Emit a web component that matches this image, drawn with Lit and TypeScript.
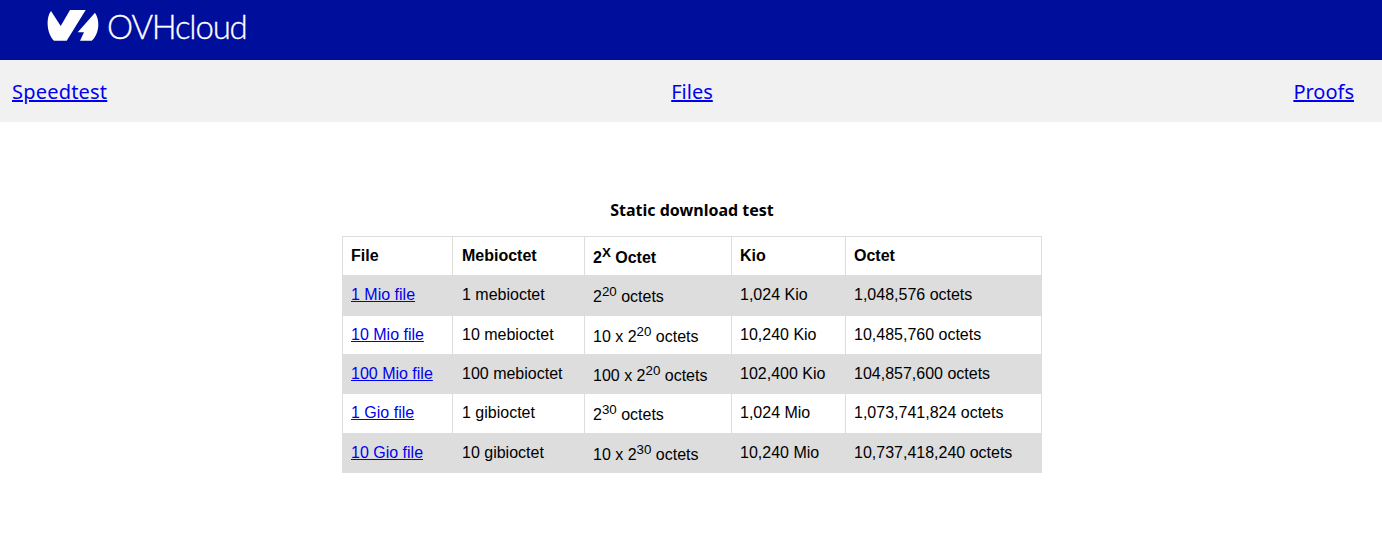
import { LitElement, html, css } from "lit";
import { customElement } from "lit/decorators.js";

const rows = [
  ["1 Mio file", "1 mebioctet", html`2<sup>20</sup> octets`, "1,024 Kio", "1,048,576 octets"],
  ["10 Mio file", "10 mebioctet", html`10 x 2<sup>20</sup> octets`, "10,240 Kio", "10,485,760 octets"],
  ["100 Mio file", "100 mebioctet", html`100 x 2<sup>20</sup> octets`, "102,400 Kio", "104,857,600 octets"],
  ["1 Gio file", "1 gibioctet", html`2<sup>30</sup> octets`, "1,024 Mio", "1,073,741,824 octets"],
  ["10 Gio file", "10 gibioctet", html`10 x 2<sup>30</sup> octets`, "10,240 Mio", "10,737,418,240 octets"],
];

@customElement("app-root")
export class AppRoot extends LitElement {
  static styles = css`
    :host { display: block; font-family: "Liberation Sans", Arial, sans-serif; color: #000; background: #fff; min-height: 543px; }
    a { color: #0000ee; }
    .top { height: 60px; background: #000e9c; display: flex; align-items: center; padding-left: 47px; gap: 8px; box-sizing: border-box; }
    .mark { width: 52px; height: 32px; display: block; margin-top: -10px; }
    .brand { color: #fff; font-family: "Lato", sans-serif; font-weight: 300; font-size: 33px; letter-spacing: -1.2px; line-height: 32px; margin-top: -9px; -webkit-text-stroke: 0.3px #fff; }
    .nav { height: 62px; background: #f1f1f1; display: grid; grid-template-columns: 1fr auto 1fr; align-items: center; padding-left: 2px; font: 400 20px "Noto Sans", sans-serif; }
    .nav a:first-child { justify-self: start; margin-left: 10px; letter-spacing: 0.2px; }
    .nav a:last-child { justify-self: end; margin-right: 28px; }
    .main { padding-left: 2px; }
    .title { margin: 78px 0 0; text-align: center; font: 700 16px/20px "Noto Sans", sans-serif; height: 36px; }
    table { border-collapse: collapse; width: 700px; margin: 0 auto; table-layout: fixed; font-size: 16px; }
    .c1 { width: 110px; }
    .c2 { width: 132px; }
    .c3 { width: 147px; }
    .c4 { width: 114px; }
    th, td { border: 1px solid #ddd; padding: 8px; text-align: left; }
    th:nth-child(2), td:nth-child(2) { padding-left: 9px; }
    th { font-weight: 700; }
    tbody tr:nth-child(odd) { background: #ddd; }
  `;

  render() {
    return html`
      <div class="top">
        <svg class="mark" viewBox="0 0 52 32" aria-hidden="true">
          <path fill="#fff" d="M4 2 L13.7 17 L23 1 L38.7 1 L19.7 31.7 L7 31.7 C0.5 26 -2 10 4 2 Z"/>
          <path fill="#fff" d="M48 3.7 L30.7 23.3 L37 23.3 L33 31.7 L44.7 31.7 C52 25 53.5 12 48 3.7 Z"/>
        </svg>
        <span class="brand">OVHcloud</span>
      </div>
      <nav class="nav">
        <a href="#">Speedtest</a>
        <a href="#">Files</a>
        <a href="#">Proofs</a>
      </nav>
      <div class="main">
        <p class="title">Static download test</p>
        <table>
          <colgroup>
            <col class="c1" /><col class="c2" /><col class="c3" /><col class="c4" /><col />
          </colgroup>
          <thead>
            <tr><th>File</th><th>Mebioctet</th><th>2<sup>X</sup> Octet</th><th>Kio</th><th>Octet</th></tr>
          </thead>
          <tbody>
            ${rows.map(
              (r) => html`<tr>
                <td><a href="#">${r[0]}</a></td><td>${r[1]}</td><td>${r[2]}</td><td>${r[3]}</td><td>${r[4]}</td>
              </tr>`
            )}
          </tbody>
        </table>
      </div>
    `;
  }
}
